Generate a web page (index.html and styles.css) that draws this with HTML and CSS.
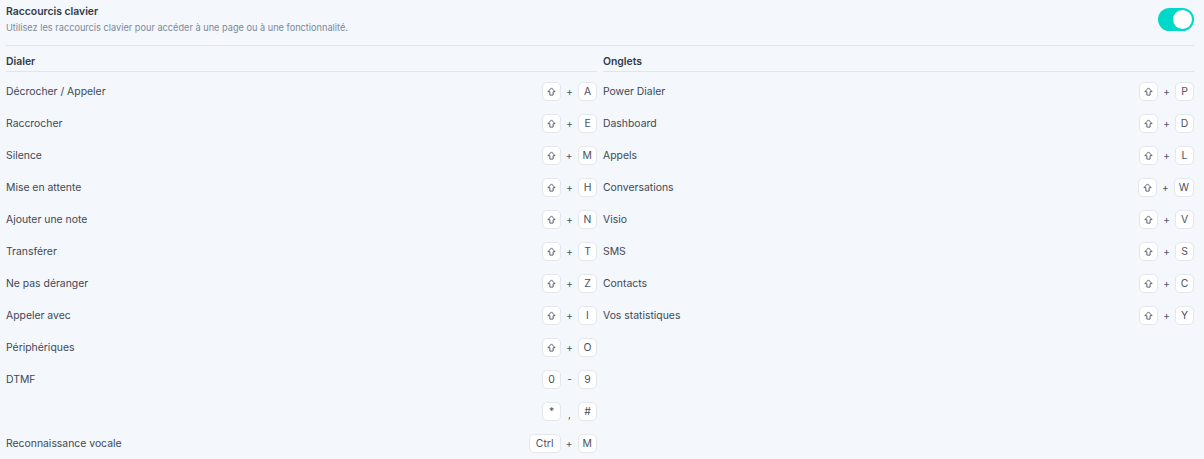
FILE: index.html
```html
<!DOCTYPE html>
<html lang="fr">
<head>
<meta charset="utf-8">
<link rel="stylesheet" href="styles.css">
</head>
<body>
<div class="page">
  <header class="top">
    <div class="top-text">
      <div class="title">Raccourcis clavier</div>
      <div class="subtitle">Utilisez les raccourcis clavier pour accéder à une page ou à une fonctionnalité.</div>
    </div>
    <div class="toggle"><span class="knob"></span></div>
  </header>
  <div class="cols">
    <section class="col">
      <div class="col-head">Dialer</div>
      <div class="rows">
        <div class="row"><span>Décrocher / Appeler</span><span class="keys"><span class="key"><svg class="shift" viewBox="0 0 10 10"><path d="M5 1 L9 5.2 H6.8 V9 H3.2 V5.2 H1 Z"/></svg></span><span class="sep">+</span><span class="key">A</span></span></div>
        <div class="row"><span>Raccrocher</span><span class="keys"><span class="key"><svg class="shift" viewBox="0 0 10 10"><path d="M5 1 L9 5.2 H6.8 V9 H3.2 V5.2 H1 Z"/></svg></span><span class="sep">+</span><span class="key">E</span></span></div>
        <div class="row"><span>Silence</span><span class="keys"><span class="key"><svg class="shift" viewBox="0 0 10 10"><path d="M5 1 L9 5.2 H6.8 V9 H3.2 V5.2 H1 Z"/></svg></span><span class="sep">+</span><span class="key">M</span></span></div>
        <div class="row"><span>Mise en attente</span><span class="keys"><span class="key"><svg class="shift" viewBox="0 0 10 10"><path d="M5 1 L9 5.2 H6.8 V9 H3.2 V5.2 H1 Z"/></svg></span><span class="sep">+</span><span class="key">H</span></span></div>
        <div class="row"><span>Ajouter une note</span><span class="keys"><span class="key"><svg class="shift" viewBox="0 0 10 10"><path d="M5 1 L9 5.2 H6.8 V9 H3.2 V5.2 H1 Z"/></svg></span><span class="sep">+</span><span class="key">N</span></span></div>
        <div class="row"><span>Transférer</span><span class="keys"><span class="key"><svg class="shift" viewBox="0 0 10 10"><path d="M5 1 L9 5.2 H6.8 V9 H3.2 V5.2 H1 Z"/></svg></span><span class="sep">+</span><span class="key">T</span></span></div>
        <div class="row"><span>Ne pas déranger</span><span class="keys"><span class="key"><svg class="shift" viewBox="0 0 10 10"><path d="M5 1 L9 5.2 H6.8 V9 H3.2 V5.2 H1 Z"/></svg></span><span class="sep">+</span><span class="key">Z</span></span></div>
        <div class="row"><span>Appeler avec</span><span class="keys"><span class="key"><svg class="shift" viewBox="0 0 10 10"><path d="M5 1 L9 5.2 H6.8 V9 H3.2 V5.2 H1 Z"/></svg></span><span class="sep">+</span><span class="key">I</span></span></div>
        <div class="row"><span>Périphériques</span><span class="keys"><span class="key"><svg class="shift" viewBox="0 0 10 10"><path d="M5 1 L9 5.2 H6.8 V9 H3.2 V5.2 H1 Z"/></svg></span><span class="sep">+</span><span class="key">O</span></span></div>
        <div class="row"><span>DTMF</span><span class="keys"><span class="key">0</span><span class="sep">-</span><span class="key">9</span></span></div>
        <div class="row"><span></span><span class="keys"><span class="key">*</span><span class="sep comma">,</span><span class="key">#</span></span></div>
        <div class="row"><span>Reconnaissance vocale</span><span class="keys"><span class="key wide">Ctrl</span><span class="sep">+</span><span class="key">M</span></span></div>
      </div>
    </section>
    <section class="col">
      <div class="col-head">Onglets</div>
      <div class="rows">
        <div class="row"><span>Power Dialer</span><span class="keys"><span class="key"><svg class="shift" viewBox="0 0 10 10"><path d="M5 1 L9 5.2 H6.8 V9 H3.2 V5.2 H1 Z"/></svg></span><span class="sep">+</span><span class="key">P</span></span></div>
        <div class="row"><span>Dashboard</span><span class="keys"><span class="key"><svg class="shift" viewBox="0 0 10 10"><path d="M5 1 L9 5.2 H6.8 V9 H3.2 V5.2 H1 Z"/></svg></span><span class="sep">+</span><span class="key">D</span></span></div>
        <div class="row"><span>Appels</span><span class="keys"><span class="key"><svg class="shift" viewBox="0 0 10 10"><path d="M5 1 L9 5.2 H6.8 V9 H3.2 V5.2 H1 Z"/></svg></span><span class="sep">+</span><span class="key">L</span></span></div>
        <div class="row"><span>Conversations</span><span class="keys"><span class="key"><svg class="shift" viewBox="0 0 10 10"><path d="M5 1 L9 5.2 H6.8 V9 H3.2 V5.2 H1 Z"/></svg></span><span class="sep">+</span><span class="key">W</span></span></div>
        <div class="row"><span>Visio</span><span class="keys"><span class="key"><svg class="shift" viewBox="0 0 10 10"><path d="M5 1 L9 5.2 H6.8 V9 H3.2 V5.2 H1 Z"/></svg></span><span class="sep">+</span><span class="key">V</span></span></div>
        <div class="row"><span>SMS</span><span class="keys"><span class="key"><svg class="shift" viewBox="0 0 10 10"><path d="M5 1 L9 5.2 H6.8 V9 H3.2 V5.2 H1 Z"/></svg></span><span class="sep">+</span><span class="key">S</span></span></div>
        <div class="row"><span>Contacts</span><span class="keys"><span class="key"><svg class="shift" viewBox="0 0 10 10"><path d="M5 1 L9 5.2 H6.8 V9 H3.2 V5.2 H1 Z"/></svg></span><span class="sep">+</span><span class="key">C</span></span></div>
        <div class="row"><span>Vos statistiques</span><span class="keys"><span class="key"><svg class="shift" viewBox="0 0 10 10"><path d="M5 1 L9 5.2 H6.8 V9 H3.2 V5.2 H1 Z"/></svg></span><span class="sep">+</span><span class="key">Y</span></span></div>
      </div>
    </section>
  </div>
</div>
</body>
</html>
```

FILE: styles.css
```css
* { box-sizing: border-box; }
html, body { margin: 0; padding: 0; background: #f4f7fb; }
body {
  font-family: Inter, "Noto Sans", sans-serif;
  font-size: 10.4px;
  color: #404855;
  overflow: hidden;
  height: 459px;
}
.page { padding: 0 10px 0 6px; }
.top {
  display: flex;
  justify-content: space-between;
  align-items: center;
  height: 46px;
  border-bottom: 1px solid #e0e4eb;
  padding-bottom: 7px;
}
.title { font-weight: 600; font-size: 10.4px; line-height: 14px; color: #333b48; margin-top: 1px; }
.subtitle { font-size: 9.2px; line-height: 14px; color: #7d889a; margin-top: 2px; }
.toggle {
  width: 36px;
  height: 23px;
  border-radius: 12px;
  background: #00d9c9;
  display: flex;
  justify-content: flex-end;
  align-items: center;
  padding: 2px;
  margin-top: 1px;
}
.knob { width: 19px; height: 19px; border-radius: 50%; background: #fff; }
.cols { display: grid; grid-template-columns: 1fr 1fr; column-gap: 6px; }
.col-head {
  font-weight: 600;
  color: #333b48;
  height: 26px;
  padding-top: 9px;
  line-height: 14px;
  border-bottom: 1px solid #e0e4eb;
}
.rows { padding-top: 3px; }
.row {
  height: 32px;
  display: flex;
  justify-content: space-between;
  align-items: center;
}
.keys { display: flex; align-items: center; }
.key {
  min-width: 19px;
  height: 19px;
  padding: 0 4px;
  background: #fff;
  border: 1px solid #e3e7ee;
  border-radius: 5px;
  display: flex;
  align-items: center;
  justify-content: center;
  font-size: 10.4px;
  color: #4a5261;
}
.key.wide { min-width: 32px; }
.sep { width: 17px; text-align: center; color: #4a5261; font-size: 10px; }
.sep.comma { padding-top: 5px; }
.shift { width: 9px; height: 9px; fill: none; stroke: #4a5261; stroke-width: 1; stroke-linejoin: round; }
```
